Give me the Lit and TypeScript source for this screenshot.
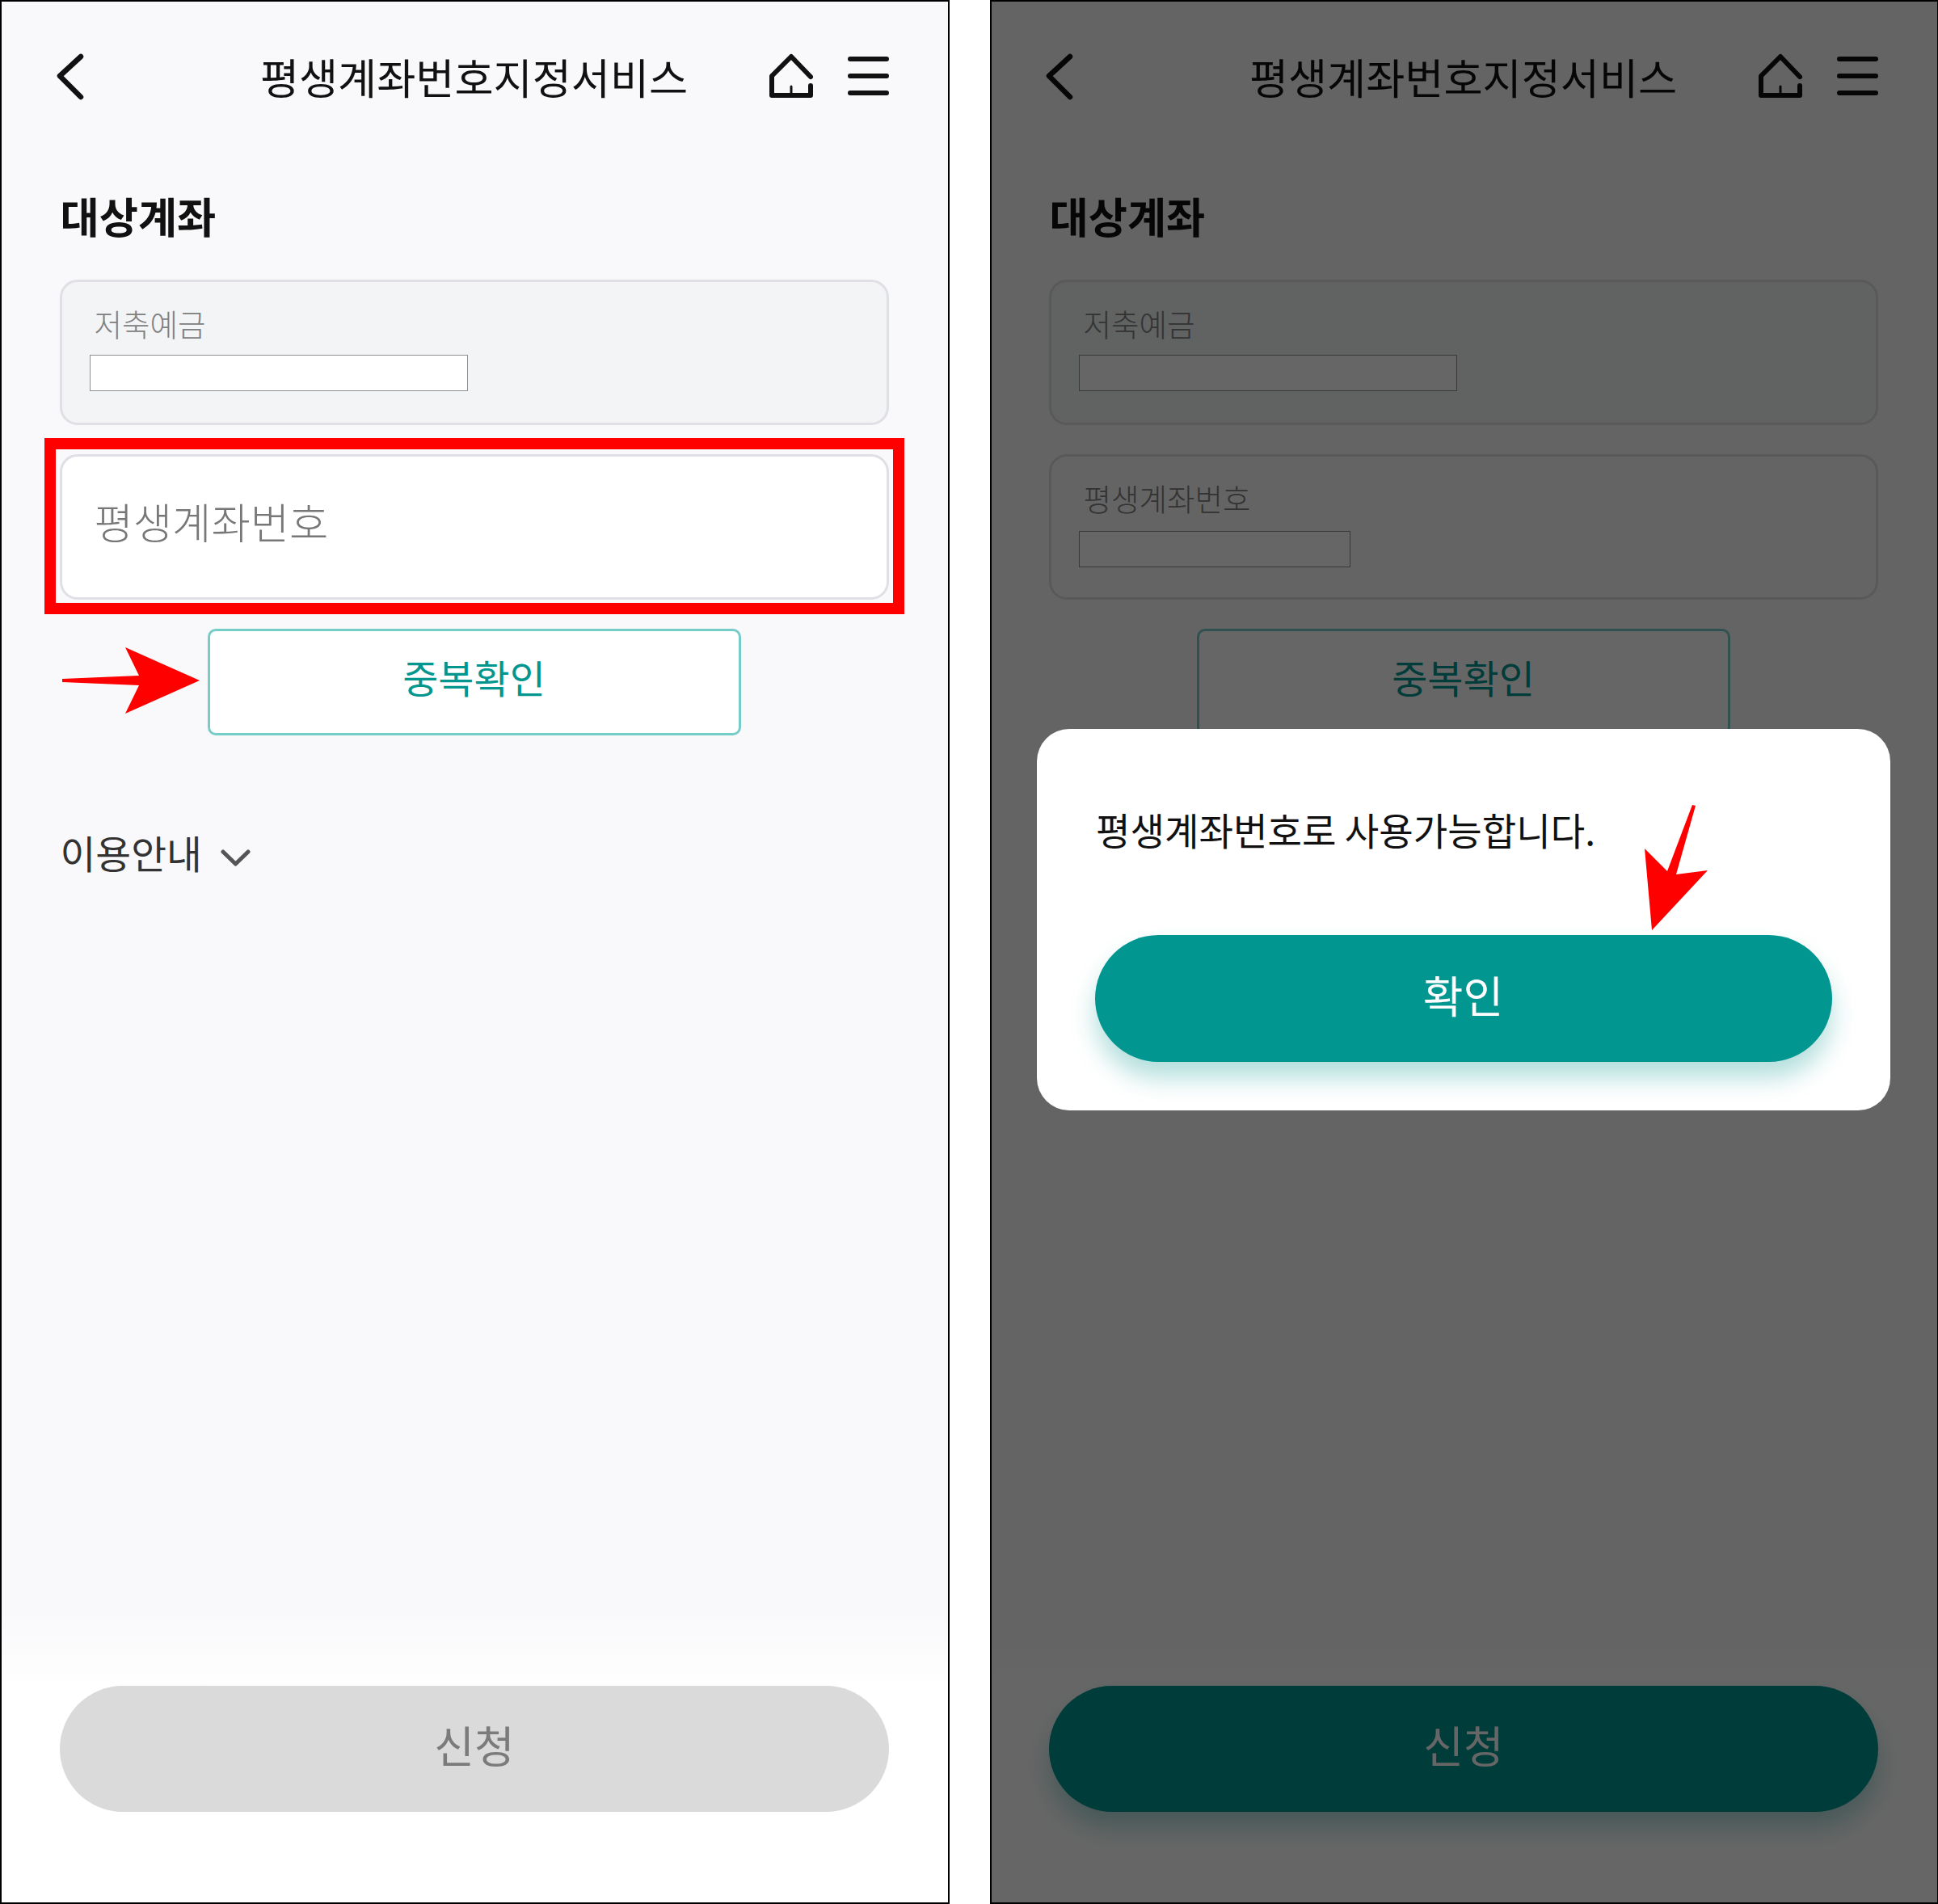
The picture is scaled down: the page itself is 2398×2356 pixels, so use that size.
import { LitElement, html, css, svg } from "lit";
import { customElement, property } from "lit/decorators.js";

const backIcon = svg`<path d="M100 70 L74 94 L100 120" />`;

@customElement("phone-screen")
class PhoneScreen extends LitElement {
  @property({ type: Boolean }) dialog = false;

  static styles = css`
    :host {
      display: block;
      box-sizing: border-box;
      border: 2px solid #000;
      position: relative;
      background: #f9f9fb;
      font-family: "Noto Sans CJK KR", "Noto Sans", sans-serif;
      overflow: hidden;
      height: 2356px;
    }
    :host([dialog]) { border-right-width: 1px; }
    .inner {
      display: flex;
      flex-direction: column;
      height: 100%;
    }
    :host([dialog]) .inner { margin-left: -1px; }
    .header {
      display: grid;
      grid-template-columns: 1fr auto 1fr;
      align-items: center;
      height: 184px;
      padding: 0 72px 0 64px;
    }
    .header .title {
      font-size: 52.3px;
      color: #111;
      font-weight: 400;
      line-height: 1;
      white-space: nowrap;
      margin-left: 6px;
    }
    .back { width: 40px; height: 64px; justify-self: start; }
    .icons { display: flex; justify-content: flex-end; gap: 41px; align-items: center; }
    .icons svg { display: block; }
    .section {
      margin: 50px 0 0 72.5px;
      font-size: 52.4px;
      font-weight: 700;
      color: #111;
      line-height: 60px;
      height: 60px;
    }
    .fields {
      display: flex;
      flex-direction: column;
      gap: 36px;
      margin: 50px 73px 0 72px;
    }
    .field {
      box-sizing: border-box;
      height: 180px;
      border: 3px solid #dfdfe5;
      border-radius: 22px;
      padding: 29px 0 0 39.5px;
      background: #fff;
    }
    .field.muted { background: #f3f4f6; }
    .field.soft { background: #f9f9fb; }
    .label {
      font-size: 37.5px;
      line-height: 44px;
      font-weight: 300;
      color: #808080;
      margin-bottom: 17px;
    }
    .field.soft .label { margin-bottom: 19px; }
    .value {
      box-sizing: border-box;
      height: 45px;
      margin-left: -6px;
      background: #fff;
      border: 1px solid #8f8f8f;
    }
    .placeholder {
      font-size: 52.5px;
      font-weight: 300;
      color: #777;
      line-height: 60px;
      padding-top: 19.5px;
    }
    .frame {
      position: absolute;
      left: 53px;
      top: 540px;
      width: 1064px;
      height: 218px;
      box-sizing: border-box;
      border: 14px solid #f00;
      pointer-events: none;
    }
    .check {
      box-sizing: border-box;
      align-self: center;
      width: 660px;
      height: 132px;
      margin: 36px 2px 0 0;
      background: #fff;
      border: 3px solid #75cdc8;
      border-radius: 10px;
      color: #02968f;
      font-size: 48px;
      font-weight: 400;
      text-align: center;
      line-height: 112px;
    }
    .guide {
      display: flex;
      align-items: center;
      gap: 23px;
      margin: 115px 0 0 72.5px;
      font-size: 47.7px;
      font-weight: 400;
      color: #333;
      line-height: 60px;
    }
    .guide svg { display: block; margin-top: 12px; }
    .spacer { flex: 1; }
    .footer {
      height: 352px;
      background: linear-gradient(to bottom, #f9f9fb 0, #fff 90px);
      padding: 84px 73px 0 72px;
      box-sizing: border-box;
    }
    .apply {
      height: 156px;
      border-radius: 78px;
      background: #dadada;
      color: #7b7b7b;
      font-size: 54px;
      text-align: center;
      line-height: 146px;
    }
    :host([dialog]) .apply {
      background: #029690;
      box-shadow: 0 20px 30px rgba(2, 150, 144, 0.3);
      color: #fff;
    }
    .overlay {
      position: absolute;
      inset: 0;
      background: rgba(0, 0, 0, 0.6);
    }
    .modal {
      position: absolute;
      left: 55.5px;
      top: 900px;
      width: 1056.5px;
      height: 472px;
      box-sizing: border-box;
      background: #fff;
      border-radius: 40px;
      padding: 94px 72px 0;
    }
    .msg {
      font-size: 46.2px;
      color: #111;
      line-height: 60px;
      white-space: nowrap;
      padding-left: 1.5px;
    }
    .confirm {
      margin-top: 101px;
      height: 157px;
      width: 912px;
      border-radius: 79px;
      background: #029690;
      box-shadow: 0 20px 30px rgba(2, 150, 144, 0.3);
      color: #fff;
      font-size: 54px;
      text-align: center;
      line-height: 148px;
    }
    .arrow { position: absolute; left: 0; top: 0; pointer-events: none; }
  `;

  render() {
    const d = this.dialog;
    return html`
      <div class="inner">
        <div class="header">
          <svg class="back" viewBox="66 62 40 64" fill="none" stroke="#111" stroke-width="6.5" stroke-linecap="round" stroke-linejoin="round">${backIcon}</svg>
          <div class="title">평생계좌번호지정서비스</div>
          <div class="icons">
            <svg width="58" height="58" viewBox="950 65 58 58" fill="none" stroke="#111" stroke-linecap="round" stroke-linejoin="round">
              <path stroke-width="6" d="M1003 95 L979 70 L955 94 V118 H1003 V106" />
              <path stroke-width="3" d="M979 107 V118" />
            </svg>
            <svg width="52" height="48" viewBox="1049 70 52 48" fill="none" stroke="#111" stroke-width="6" stroke-linecap="round">
              <path d="M1052 73 H1097 M1052 94 H1097 M1052 115 H1097" />
            </svg>
          </div>
        </div>
        <div class="section">대상계좌</div>
        <div class="fields">
          <div class="field muted">
            <div class="label">저축예금</div>
            <div class="value" style="width:468px"></div>
          </div>
          ${d
            ? html`<div class="field soft">
                <div class="label">평생계좌번호</div>
                <div class="value" style="width:336px"></div>
              </div>`
            : html`<div class="field"><div class="placeholder">평생계좌번호</div></div>`}
        </div>
        <div class="check">중복확인</div>
        ${d
          ? null
          : html`<div class="guide">
              <span>이용안내</span>
              <svg width="37" height="21" viewBox="0 0 37 21" fill="none" stroke="#555" stroke-width="5" stroke-linecap="round" stroke-linejoin="round">
                <path d="M3 3 L18.5 18 L34 3" />
              </svg>
            </div>`}
        <div class="spacer"></div>
        <div class="footer"><div class="apply">신청</div></div>
      </div>
      ${d
        ? html`
            <div class="overlay"></div>
            <div class="modal">
              <div class="msg">평생계좌번호로 사용가능합니다.</div>
              <div class="confirm">확인</div>
            </div>
            <svg class="arrow" width="1171" height="2352" viewBox="1227 2 1171 2352">
              <path fill="#f00" d="M2094 996 L2098 997 L2074 1082 L2113 1077 L2044 1151 L2035 1050 L2063 1078 Z" />
            </svg>
          `
        : html`
            <div class="frame"></div>
            <svg class="arrow" width="1171" height="2352" viewBox="2 2 1171 2352">
              <path fill="#f00" d="M77 840 L172 836 L155 801 L247 842 L155 883 L172 848 L77 844 Z" />
            </svg>
          `}
    `;
  }
}

@customElement("app-root")
class AppRoot extends LitElement {
  static styles = css`
    :host {
      display: flex;
      justify-content: space-between;
      width: 2398px;
      height: 2356px;
      background: #fff;
    }
    phone-screen { width: 1175px; flex: none; }
    .right { width: 1173px; }
  `;
  render() {
    return html`
      <phone-screen></phone-screen>
      <phone-screen class="right" dialog></phone-screen>
    `;
  }
}
